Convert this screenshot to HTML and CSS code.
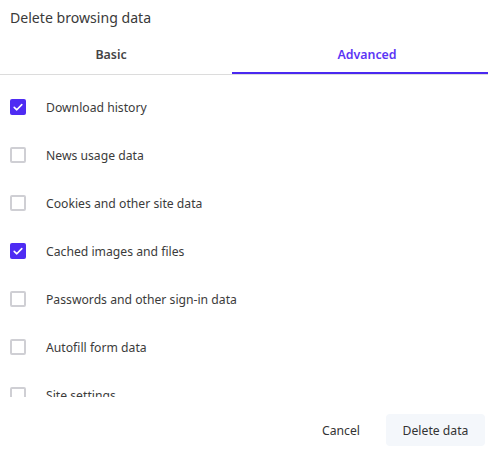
FILE: index.html
```html
<!DOCTYPE html>
<html>
<head>
<meta charset="utf-8">
<link rel="stylesheet" href="styles.css">
</head>
<body>
<div class="dialog">
  <div class="title">Delete browsing data</div>
  <div class="tabs">
    <div class="tab tab-basic">Basic</div>
    <div class="tab tab-adv active">Advanced</div>
  </div>
  <div class="list">
    <div class="row"><span class="box checked"><svg viewBox="0 0 16 16" width="16" height="16"><path d="M4.2 8.3 L6.8 10.8 L11.8 5.6" fill="none" stroke="#fff" stroke-width="1.6" stroke-linecap="round" stroke-linejoin="round"/></svg></span><span class="label">Download history</span></div>
    <div class="row"><span class="box"></span><span class="label">News usage data</span></div>
    <div class="row"><span class="box"></span><span class="label">Cookies and other site data</span></div>
    <div class="row"><span class="box checked"><svg viewBox="0 0 16 16" width="16" height="16"><path d="M4.2 8.3 L6.8 10.8 L11.8 5.6" fill="none" stroke="#fff" stroke-width="1.6" stroke-linecap="round" stroke-linejoin="round"/></svg></span><span class="label">Cached images and files</span></div>
    <div class="row"><span class="box"></span><span class="label">Passwords and other sign-in data</span></div>
    <div class="row"><span class="box"></span><span class="label">Autofill form data</span></div>
    <div class="row"><span class="box"></span><span class="label">Site settings</span></div>
  </div>
  <div class="footer">
    <button class="btn cancel">Cancel</button>
    <button class="btn primary">Delete data</button>
  </div>
</div>
</body>
</html>
```
FILE: styles.css
```css
html, body {
  margin: 0;
  padding: 0;
  background: #fff;
}
body {
  font-family: "Noto Sans", "Open Sans", sans-serif;
  color: #333;
  font-size: 12.2px;
}
.dialog {
  width: 488px;
  height: 449px;
  display: flex;
  flex-direction: column;
  overflow: hidden;
}
.title {
  height: 36px;
  box-sizing: border-box;
  padding: 8px 10px 0;
  font-size: 14.1px;
  color: #3a3a3a;
}
.tabs {
  display: grid;
  grid-template-columns: 232px 1fr;
  height: 39px;
  border-bottom: 1px solid #dcdcdc;
  box-sizing: border-box;
}
.tab {
  display: flex;
  align-items: center;
  justify-content: center;
  font-size: 12.4px;
  font-weight: 600;
  color: #444;
  padding-bottom: 2px;
  box-sizing: border-box;
}
.tab-basic { padding-right: 10px; }
.tab-adv { padding-left: 14px; }
.tab.active {
  color: #5b35f5;
  border-bottom: 2px solid #4a28f0;
  padding-bottom: 0;
}
.list {
  height: 322px;
  overflow: hidden;
  padding-top: 8px;
  box-sizing: border-box;
}
.row {
  height: 48px;
  display: flex;
  align-items: center;
  padding-left: 10px;
  gap: 20px;
}
.box {
  width: 16px;
  height: 16px;
  box-sizing: border-box;
  border: 2px solid #cfcfd4;
  border-radius: 2px;
  flex: none;
  display: flex;
}
.box.checked {
  background: #4e2cf3;
  border: none;
}
.label {
  font-size: 12.2px;
  color: #3b3b3b;
}
.footer {
  flex: 1;
  display: flex;
  justify-content: flex-end;
  align-items: flex-start;
  padding: 17px 3px 0 0;
  gap: 4px;
}
.btn {
  font-family: inherit;
  font-size: 12.2px;
  color: #333;
  background: none;
  border: none;
  height: 32px;
  border-radius: 4px;
  padding: 0 16px;
  cursor: pointer;
}
.cancel { padding: 0 22px; }
.primary {
  background: #f4f7fb;
  width: 99px;
  padding: 0;
}
```
